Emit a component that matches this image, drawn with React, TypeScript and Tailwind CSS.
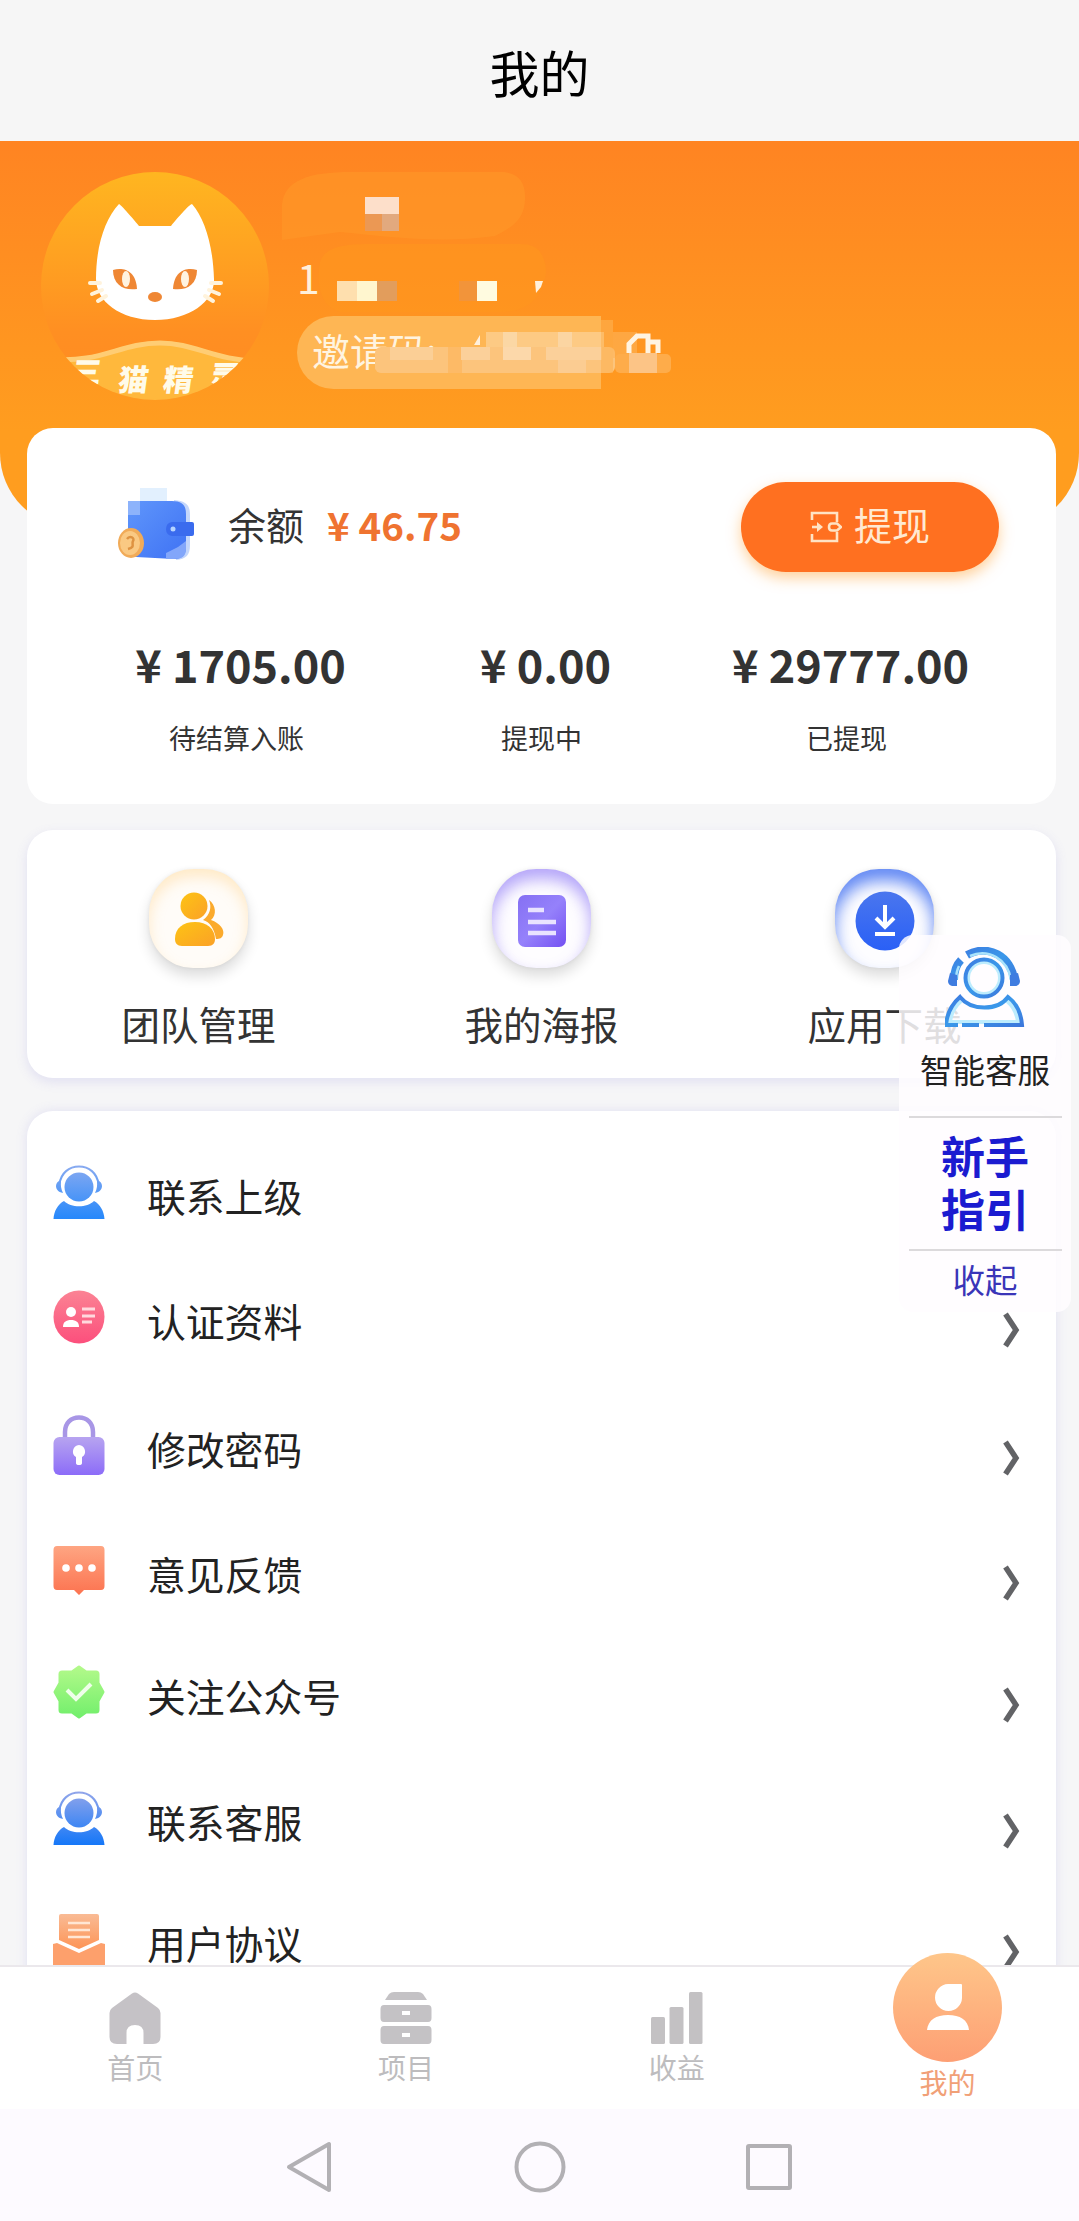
import type { ReactNode } from "react"

const stats = [
  { amount: "1705.00", label: "待结算入账" },
  { amount: "0.00", label: "提现中" },
  { amount: "29777.00", label: "已提现" },
]

function Avatar() {
  return (
    <svg className="size-[230px] shrink-0" viewBox="0 0 230 230">
      <defs>
        <linearGradient id="avatar-bg" x1="0" y1="0" x2="0" y2="1">
          <stop offset="0" stopColor="#ffb620" />
          <stop offset="0.7" stopColor="#ff8f22" />
          <stop offset="1" stopColor="#ff8a22" />
        </linearGradient>
        <clipPath id="avatar-clip">
          <circle cx="115" cy="115" r="114" />
        </clipPath>
      </defs>
      <g clipPath="url(#avatar-clip)">
        <rect width="230" height="230" fill="url(#avatar-bg)" />
        {/* cat head */}
        <path
          d="M79 33C80 33 91 45 99 55H131C139 45 150 33 152 33C165 48 173 75 174 108C175 130 150 149 115 149C80 149 56 130 56 108C56 75 65 48 79 33Z"
          fill="#fff"
        />
        <g stroke="#fff3dc" strokeWidth="4" strokeLinecap="round">
          <path d="M50 112H60M52 123L62 119M58 130L66 125M181 112H171M179 123L169 119M173 130L165 125" />
        </g>
        <path d="M73 99C84 96 96 100 97 118C84 120 73 114 73 99Z" fill="#ef8734" />
        <path d="M157 99C146 96 134 100 133 118C146 120 157 114 157 99Z" fill="#ef8734" />
        <ellipse cx="86" cy="108" rx="4" ry="8" fill="#fff3e0" />
        <ellipse cx="145" cy="108" rx="4" ry="8" fill="#fff3e0" />
        <ellipse cx="115" cy="126" rx="7" ry="5" fill="#ef8734" />
        {/* banner */}
        <path d="M10 186C60 191 80 170 120 170C155 170 175 188 220 188V230H10Z" fill="#ffb83c" />
        <path d="M10 188C60 193 80 172 120 172C155 172 175 190 220 190" fill="none" stroke="#ffcd74" strokeWidth="5" />
        <g
          transform="translate(1 220) skewX(-8)"
          fill="#fffbea"
          fontSize="30"
          fontWeight="800"
          fontFamily="'Noto Sans CJK SC', sans-serif"
          textAnchor="middle"
        >
          <text x="43" y="-8">三</text>
          <text x="91" y="0">猫</text>
          <text x="136" y="0">精</text>
          <text x="182" y="-3">灵</text>
        </g>
      </g>
    </svg>
  )
}

/* pixelated patches that hide the account details */
function Mosaic() {
  return (
    <svg className="absolute left-[260px] top-[19px] h-[250px] w-[440px]" viewBox="260 160 440 250">
      <path d="M282 205C284 180 310 172 350 172H500C518 172 526 182 525 200C524 218 515 226 495 236C440 244 380 236 340 232L282 240Z" fill="#ff9728" opacity="0.6" />
      <path d="M320 262C325 248 340 244 370 244H520C535 244 544 250 546 270C544 295 530 312 500 312H340C320 305 316 285 320 262Z" fill="#ff961e" opacity="0.6" />
      <rect x="365" y="197" width="34" height="17" fill="#fddfca" />
      <rect x="365" y="214" width="17" height="17" fill="#eb9854" />
      <rect x="382" y="214" width="17" height="17" fill="#e2a97e" />
      <rect x="337" y="281" width="20" height="20" fill="#fedfae" />
      <rect x="357" y="281" width="20" height="20" fill="#fff6cf" />
      <rect x="377" y="281" width="20" height="20" fill="#e29d5c" />
      <rect x="459" y="281" width="18" height="20" fill="#f2943a" />
      <rect x="477" y="281" width="20" height="20" fill="#fffbe0" />
      <path d="M535 281H543L541 287L536 293Z" fill="#fff0dc" />
      <rect x="375" y="347" width="240" height="26" rx="6" fill="#fcc47c" />
      <rect x="390" y="347" width="43" height="13" fill="#fbcf96" />
      <rect x="448" y="347" width="14" height="26" fill="#fdba66" />
      <path d="M474 345L480 335L480 345Z" fill="#fff0dc" />
      <rect x="486" y="332" width="118" height="15" fill="#fdca84" />
      <rect x="503" y="332" width="14" height="28" fill="#fbd7a4" />
      <rect x="461" y="347" width="29" height="13" fill="#fbd09a" />
      <rect x="503" y="347" width="28" height="13" fill="#fcd8aa" />
      <rect x="558" y="332" width="14" height="28" fill="#fbd5a2" />
      <rect x="546" y="347" width="56" height="13" fill="#fbd09a" />
      <rect x="558" y="360" width="28" height="13" fill="#fbcc92" />
      <rect x="601" y="320" width="12" height="53" fill="#fdb254" opacity="0.6" />
      <rect x="613" y="332" width="24" height="26" fill="#feb45a" opacity="0.6" />
      <path d="M629 353V344L637 336H648V353M648 342H658V353" fill="none" stroke="#fff4e2" strokeWidth="5" />
      <rect x="615" y="354" width="56" height="19" rx="5" fill="#feac4a" />
      <rect x="629" y="353" width="28" height="20" fill="#fcc486" />
    </svg>
  )
}

function Wallet() {
  return (
    <svg className="h-[80px] w-[80px]" viewBox="0 0 80 80">
      <defs>
        <linearGradient id="wallet" x1="0" y1="0" x2="1" y2="1">
          <stop offset="0" stopColor="#5f96fb" />
          <stop offset="1" stopColor="#3f72f4" />
        </linearGradient>
      </defs>
      <rect x="24" y="1" width="27" height="20" fill="#e2f0fe" />
      <path d="M58 13C70 14 74 18 74 28V58C74 68 70 72 60 73Z" fill="#c3d6fb" />
      <path d="M16 14H56C66 14 70 18 70 27V60C70 68 66 72 58 72L20 70C14 70 12 66 12 62V18C12 15 13 14 16 14Z" fill="url(#wallet)" />
      <rect x="12" y="14" width="12" height="14" fill="#8db3fb" />
      <path d="M50 66L62 60L70 54V62C70 69 66 72 58 72H50Z" fill="#82a6fa" />
      <path d="M56 35H76Q78 35 78 37V47Q78 49 76 49H56Q50 48 50 42Q50 36 56 35Z" fill="#3a6bee" />
      <circle cx="57" cy="42" r="2.5" fill="#b6d4ff" />
      <ellipse cx="15" cy="56" rx="13" ry="15" fill="#f1ab58" />
      <ellipse cx="14" cy="56" rx="10" ry="12" fill="#fac983" />
      <path d="M11 52C14 48 19 51 17 54C15 57 20 60 12 62" fill="none" stroke="#de9241" strokeWidth="2.5" />
    </svg>
  )
}

function WithdrawIcon() {
  return (
    <svg className="size-[32px]" viewBox="0 0 32 32" fill="none" stroke="#ffe3c4" strokeWidth="2.6">
      <path d="M2 9V2H27V11M27 21V30H2V23" />
      <path d="M2 16H9" />
      <path d="M7 11L13 16L7 21Z" fill="#ffe3c4" stroke="none" />
      <path d="M31 16L27 19.500H22Q19 19.500 19 16Q19 12.500 22 12.500H27Z" />
    </svg>
  )
}

function TeamIcon() {
  return (
    <svg className="size-[56px]" viewBox="0 0 56 56">
      <defs>
        <linearGradient id="team" x1="0" y1="0" x2="1" y2="1">
          <stop offset="0" stopColor="#fdc414" />
          <stop offset="1" stopColor="#fba127" />
        </linearGradient>
      </defs>
      <path d="M38 9C45 14 46 24 40 29C49 32 54 39 52 44C51 47 49 48 45 48C43 37 39 31 32 29C39 24 41 16 38 9Z" fill="#fbaa2c" />
      <circle cx="23" cy="15" r="13.500" fill="url(#team)" />
      <path d="M4 48C4 37 12 31 24 31C36 31 44 38 44 48C44 52 42 55 37 55H11C6 55 4 52 4 48Z" fill="url(#team)" />
    </svg>
  )
}

function PosterIcon() {
  return (
    <svg className="h-[52px] w-[48px]" viewBox="0 0 48 52">
      <defs>
        <linearGradient id="poster" x1="0" y1="0" x2="1" y2="1">
          <stop offset="0" stopColor="#8570f3" />
          <stop offset="0.5" stopColor="#9581fb" />
          <stop offset="1" stopColor="#7450f2" />
        </linearGradient>
      </defs>
      <rect width="48" height="52" rx="7" fill="url(#poster)" />
      <path d="M10 15H26M10 27H38M10 38H38" stroke="#e9e3ff" strokeWidth="4.500" />
    </svg>
  )
}

function DownloadIcon() {
  return (
    <svg className="size-[60px]" viewBox="0 0 60 60">
      <defs>
        <linearGradient id="download" x1="0" y1="0" x2="0" y2="1">
          <stop offset="0" stopColor="#4a76ee" />
          <stop offset="1" stopColor="#2a60f6" />
        </linearGradient>
      </defs>
      <circle cx="30" cy="30" r="29.500" fill="url(#download)" />
      <path d="M30 14V35M21 27L30 36L39 27M20 43H40" fill="none" stroke="#fff" strokeWidth="4" />
    </svg>
  )
}

function AgentIcon({ id, from, to }: { id: string; from: string; to: string }) {
  return (
    <svg className="h-[54px] w-[52px]" viewBox="0 0 52 54">
      <defs>
        <linearGradient id={id} gradientUnits="userSpaceOnUse" x1="0" y1="0" x2="0" y2="54">
          <stop offset="0" stopColor={from} />
          <stop offset="1" stopColor={to} />
        </linearGradient>
      </defs>
      <path d="M6.500 19C8 8 16 1.500 26 1.500C36 1.500 44 8 45.500 19" fill="none" stroke={`url(#${id})`} strokeWidth="2" />
      <g fill={`url(#${id})`}>
        <path d="M8 15C7.500 20 8 24 10 28C5 27 3 24 3 21C3 18 5 16 8 15ZM44 15C44.500 20 44 24 42 28C47 27 49 24 49 21C49 18 47 16 44 15Z" />
        <circle cx="26" cy="22" r="14.500" />
        <path d="M11 36C18 43 34 43 41 36C47 39 51 46 51.500 54H0.500C1 46 5 39 11 36Z" />
      </g>
    </svg>
  )
}

function IdIcon() {
  return (
    <svg className="h-[54px] w-[52px]" viewBox="0 0 52 54">
      <defs>
        <linearGradient id="idcard" x1="0" y1="0" x2="0" y2="1">
          <stop offset="0" stopColor="#fb8394" />
          <stop offset="1" stopColor="#fc4f7c" />
        </linearGradient>
      </defs>
      <ellipse cx="26" cy="27" rx="25.500" ry="26.500" fill="url(#idcard)" />
      <circle cx="18" cy="22" r="5" fill="#fff" />
      <path d="M10 37C10 32 13 30 18 30C23 30 26 32 26 37Z" fill="#fff" />
      <path d="M29 19H42M29 26H42M29 32H39" stroke="#ffd9de" strokeWidth="3" />
    </svg>
  )
}

function LockIcon() {
  return (
    <svg className="h-[60px] w-[52px]" viewBox="0 0 52 60">
      <defs>
        <linearGradient id="lock" x1="0" y1="0" x2="0" y2="1">
          <stop offset="0" stopColor="#b7a4f0" />
          <stop offset="1" stopColor="#8c6cf8" />
        </linearGradient>
      </defs>
      <path d="M12 24V17C12 8 18 2.500 26 2.500C34 2.500 40 8 40 17V24" fill="none" stroke="#a896e6" strokeWidth="4.500" />
      <rect x="0.500" y="22" width="51" height="38" rx="6" fill="url(#lock)" />
      <path d="M26 30A6.500 6.500 0 0 1 29 42V48Q29 50 26 50Q23 50 23 48V42A6.500 6.500 0 0 1 26 30Z" fill="#fff" />
    </svg>
  )
}

function FeedbackIcon() {
  return (
    <svg className="h-[49px] w-[52px]" viewBox="0 0 52 49">
      <defs>
        <linearGradient id="feedback" x1="0" y1="0" x2="0" y2="1">
          <stop offset="0" stopColor="#fea582" />
          <stop offset="1" stopColor="#fc7350" />
        </linearGradient>
      </defs>
      <path d="M4 0H48Q51.500 0 51.500 4V40Q51.500 44 48 44H31L26 49L21 44H4Q0.500 44 0.500 40V4Q0.500 0 4 0Z" fill="url(#feedback)" />
      <g fill="#fff">
        <circle cx="13" cy="22" r="3.800" />
        <circle cx="26" cy="22" r="3.800" />
        <circle cx="39" cy="22" r="3.800" />
      </g>
    </svg>
  )
}

function VerifiedIcon() {
  return (
    <svg className="h-[54px] w-[52px]" viewBox="0 0 52 54">
      <defs>
        <linearGradient id="verified" x1="0" y1="0" x2="0" y2="1">
          <stop offset="0" stopColor="#b2f98a" />
          <stop offset="1" stopColor="#73ef6c" />
        </linearGradient>
      </defs>
      <path
        d="M26 2L33 7H43Q45 7 45 9V18L50 27L45 36V45Q45 47 43 47H33L26 52L19 47H9Q7 47 7 45V36L2 27L7 18V9Q7 7 9 7H19Z"
        fill="url(#verified)"
        stroke="url(#verified)"
        strokeWidth="3"
        strokeLinejoin="round"
      />
      <path d="M14 25L23 34L38 19" fill="none" stroke="#effeea" strokeWidth="4" />
    </svg>
  )
}

function AgreementIcon() {
  return (
    <svg className="mt-[4px] h-[54px] w-[52px]" viewBox="0 0 52 54">
      <defs>
        <linearGradient id="agreement" x1="0" y1="0" x2="0" y2="1">
          <stop offset="0" stopColor="#f9bb95" />
          <stop offset="1" stopColor="#fd9456" />
        </linearGradient>
      </defs>
      <path d="M8 0H44Q46 0 46 2V26L26 35L6 26V2Q6 0 8 0Z" fill="url(#agreement)" />
      <path d="M15 9H37M15 16H37M15 23H37" stroke="#ffe6d4" strokeWidth="2.500" />
      <path d="M0 30L4 29L26 39L48 29L52 30V54H0Z" fill="#fda06c" />
    </svg>
  )
}

function ServiceIcon() {
  return (
    <svg className="h-[80px] w-[80px]" viewBox="0 0 80 80" fill="none">
      <defs>
        <linearGradient id="service" x1="0" y1="0" x2="1" y2="1">
          <stop offset="0" stopColor="#3d7be0" />
          <stop offset="0.5" stopColor="#3a98ea" />
          <stop offset="1" stopColor="#3c78dc" />
        </linearGradient>
      </defs>
      {/* headset band */}
      <path d="M22 8C43 -4 67 10 69 33M16 13C11 18 9 25 9 33" stroke="url(#service)" strokeWidth="8" />
      <path d="M25 9C43 1 63 12 66 33M14 19C12 23 11 28 11 33" stroke="#a9e2fb" strokeWidth="2.500" />
      <path d="M5 26L12 28V39H7Q3 38 3 34ZM73 26L65 28V39H71Q75 38 75 34Z" fill="#3f7ce0" />
      {/* head */}
      <circle cx="39" cy="31" r="15.500" stroke="#bdecfd" strokeWidth="3" />
      <circle cx="39" cy="31" r="18.500" stroke="url(#service)" strokeWidth="4" />
      {/* shoulders */}
      <path d="M16 54C9 60 6 66 5 75H73C72 66 68 59 62 54" stroke="#bdecfd" strokeWidth="4" />
      <path d="M34 78H17M39 78H77C76 65 71 56 63 50C53 64 26 64 15 50C7 57 2 66 1 78H13" stroke="url(#service)" strokeWidth="4" />
    </svg>
  )
}

function Tile({ className, label, children }: { className: string; label: string; children: ReactNode }) {
  return (
    <div className="flex flex-col items-center">
      <div className={`flex size-[99px] items-center justify-center rounded-[44px] pt-[5px] ${className}`}>{children}</div>
      <span className="mt-[36px] text-[38.5px] leading-none text-[#333]">{label}</span>
    </div>
  )
}

const menu = [
  { label: "联系上级", icon: <AgentIcon id="agent-up" from="#8aabf0" to="#2688fb" />, row: "h-[124px]", arrow: false },
  { label: "认证资料", icon: <IdIcon />, row: "h-[126px]", arrow: true },
  { label: "修改密码", icon: <LockIcon />, row: "h-[130px]", arrow: true },
  { label: "意见反馈", icon: <FeedbackIcon />, row: "h-[120px]", arrow: true },
  { label: "关注公众号", icon: <VerifiedIcon />, row: "h-[124px]", arrow: true },
  { label: "联系客服", icon: <AgentIcon id="agent-service" from="#93a6ea" to="#1577f8" />, row: "h-[128px]", arrow: true },
  { label: "用户协议", icon: <AgreementIcon />, row: "h-[114px]", arrow: true },
]

function Chevron() {
  return (
    <svg className="mt-[16px] h-[36px] w-[18px]" viewBox="0 0 18 36">
      <path d="M3.500 2L14 18L3.500 34" fill="none" stroke="#626366" strokeWidth="5.500" />
    </svg>
  )
}

export default function App() {
  return (
    <div className="relative flex h-[2221px] w-[1079px] flex-col overflow-hidden bg-[#f6f6f7] font-['Noto_Sans_CJK_SC',sans-serif]">
      <header className="flex h-[141px] shrink-0 items-center justify-center bg-[#f6f6f6]">
        <h1 className="text-[50px] leading-none text-black">我的</h1>
      </header>

      <main className="min-h-0 flex-1 overflow-hidden">
        {/* profile */}
        <section className="relative h-[387px] rounded-b-[75px] bg-linear-to-b from-[#ff8422] to-[#ff9d1f] to-75% pt-[30px] pl-[40px]">
          <div className="flex">
            <Avatar />
            <div className="ml-[27px] flex flex-col items-start pt-[85px]">
              <span className="h-[60px] text-[41px] leading-none text-[#fff0dc]">1</span>
              <div className="flex h-[73px] w-[304px] items-center rounded-l-full rounded-r-[26px] bg-[#feb654] pb-[6px] pl-[15px]">
                <span className="text-[38px] leading-none text-[#fff4e0]">邀请码:</span>
              </div>
            </div>
          </div>
          <Mosaic />
        </section>

        {/* balance */}
        <section className="relative mr-[23px] ml-[27px] mt-[-100px] h-[376px] rounded-[26px] bg-white px-[57px] pt-[54px]">
          <div className="flex h-[90px] items-center">
            <div className="ml-[32px]">
              <Wallet />
            </div>
            <span className="mb-[6px] ml-[32px] text-[38px] leading-none text-[#333]">余额</span>
            <span className="mb-[6px] ml-[23px] text-[38.5px] leading-none font-bold text-[#ef7330]">¥ 46.75</span>
            <button className="ml-auto flex h-[90px] w-[258px] items-center justify-center gap-[12px] rounded-full bg-[#ff7020] text-[38px] leading-none text-[#ffe9d2] shadow-[0_6px_14px_rgba(255,165,60,0.5)]">
              <WithdrawIcon />
              <span className="mb-[6px]">提现</span>
            </button>
          </div>
          <div className="mt-[69px] grid grid-cols-3">
            {stats.map((s) => (
              <div key={s.label} className="flex flex-col items-center">
                <span className="ml-[8px] text-[45px] leading-none font-bold whitespace-nowrap text-[#333]">¥ {s.amount}</span>
                <span className="mt-[38px] text-[27px] leading-none text-[#333]">{s.label}</span>
              </div>
            ))}
          </div>
        </section>

        {/* shortcuts */}
        <section className="mr-[23px] ml-[27px] mt-[26px] grid h-[248px] grid-cols-3 rounded-[26px] bg-white pt-[39px] shadow-[0_4px_12px_rgba(120,110,220,0.16)]">
          <Tile label="团队管理" className="bg-[#fffcf8] shadow-[0_8px_14px_rgba(0,0,0,0.14),0_0_4px_rgba(0,0,0,0.06),inset_0_8px_14px_rgba(255,205,120,0.38)]">
            <div className="-mt-[5px]">
              <TeamIcon />
            </div>
          </Tile>
          <Tile label="我的海报" className="bg-[#fefdff] shadow-[0_8px_14px_rgba(0,0,0,0.14),0_0_4px_rgba(0,0,0,0.06),inset_0_10px_16px_rgba(130,105,245,0.6)]">
            <PosterIcon />
          </Tile>
          <Tile label="应用下载" className="bg-[#fdfdff] shadow-[0_8px_14px_rgba(0,0,0,0.14),0_0_4px_rgba(0,0,0,0.06),inset_0_12px_16px_rgba(50,100,240,0.75)]">
            <DownloadIcon />
          </Tile>
        </section>

        {/* menu */}
        <section className="mr-[23px] ml-[27px] mt-[33px] h-[900px] rounded-[26px] bg-white pt-[24px] pr-[36px] pl-[26px] shadow-[0_0_12px_rgba(120,110,220,0.16)]">
          {menu.map((item) => (
            <div key={item.label} className={`flex items-center ${item.row}`}>
              <div className="mb-[10px]">{item.icon}</div>
              <span className="mb-[3px] ml-[42px] text-[38.8px] leading-none text-[#222]">{item.label}</span>
              <div className="ml-auto">{item.arrow && <Chevron />}</div>
            </div>
          ))}
        </section>
      </main>

      {/* tab bar */}
      <nav className="grid h-[144px] w-[1083px] shrink-0 grid-cols-4 border-t-2 border-[#ebe8ec] bg-white text-[28px] leading-none text-[#bdbcbe]">
        <div className="flex flex-col items-center pt-[25px]">
          <svg className="size-[52px]" viewBox="0 0 52 52">
            <path d="M23 1.500Q26 -0.500 29 1.500L49 16Q51.500 18 51.500 21V45Q51.500 52 44 52H34.500V41Q34.500 33 26 33Q17.500 33 17.500 41V52H8Q0.500 52 0.500 45V21Q0.500 18 3 16Z" fill="#c5c2c6" />
          </svg>
          <span className="mt-[9px]">首页</span>
        </div>
        <div className="flex flex-col items-center pt-[25px]">
          <svg className="size-[52px]" viewBox="0 0 52 52" fill="#c4c2c5">
            <path d="M14 0H38Q41 0 43 2L47 8H5L9 2Q11 0 14 0Z" />
            <path d="M4 13H48Q51.500 13 51.500 17V26Q51.500 30 48 30H4Q0.500 30 0.500 26V17Q0.500 13 4 13Z" />
            <path d="M4 34H48Q51.500 34 51.500 38V48Q51.500 52 48 52H4Q0.500 52 0.500 48V38Q0.500 34 4 34Z" />
            <path d="M22 21H30M22 43H30" stroke="#fff" strokeWidth="4" />
          </svg>
          <span className="mt-[9px]">项目</span>
        </div>
        <div className="flex flex-col items-center pt-[25px]">
          <svg className="size-[52px]" viewBox="0 0 52 52" fill="#c3c1c3">
            <rect y="25" width="14" height="27" rx="1.500" />
            <rect x="18.500" y="15" width="14" height="37" rx="1.500" />
            <rect x="38" width="13.500" height="52" rx="1.500" />
          </svg>
          <span className="mt-[9px]">收益</span>
        </div>
        <div className="flex flex-col items-center text-[#f1a077]">
          <div className="relative mt-[-14px] flex size-[109px] items-center justify-center rounded-full bg-linear-to-b from-[#fec68a] to-[#fd9f74]">
            <svg className="h-[47px] w-[42px]" viewBox="0 0 42 47" fill="#fff">
              <path d="M21 0H34Q35 0 35 1V14A13.500 13.500 0 1 1 21 0Z" />
              <path d="M0 46C1 36 9 31 21 31C33 31 41 36 42 46Z" />
            </svg>
          </div>
          <span className="mt-[6px]">我的</span>
        </div>
      </nav>

      {/* system keys */}
      <footer className="flex h-[112px] shrink-0 items-center justify-center bg-[#fdfaff] pt-[3px]">
        <svg className="h-[52px] w-[508px]" viewBox="0 0 508 52" fill="none" stroke="#b2b0b4" strokeWidth="4" strokeLinejoin="round">
          <path d="M3 26L43 3V49Z" />
          <circle cx="254" cy="26" r="23.500" />
          <rect x="462" y="5" width="42" height="42" rx="1" />
        </svg>
      </footer>

      {/* floating helper */}
      <aside className="absolute top-[935px] left-[899px] flex h-[377px] w-[172px] flex-col items-center rounded-[14px] bg-[#fffdff]/85 pt-[12px]">
        <ServiceIcon />
        <span className="mt-[26px] text-[32.5px] leading-none text-[#222]">智能客服</span>
        <div className="mt-[30px] h-[2px] w-[153px] bg-[#dcdadc]" />
        <p className="mt-[11px] w-[92px] text-center text-[44px] leading-[53px] font-bold text-[#1b1bd0]">新手指引</p>
        <div className="mt-[14px] h-[2px] w-[153px] bg-[#dcdadc]" />
        <span className="mt-[12px] text-[32.5px] leading-none text-[#3a35b8]">收起</span>
      </aside>
    </div>
  )
}
